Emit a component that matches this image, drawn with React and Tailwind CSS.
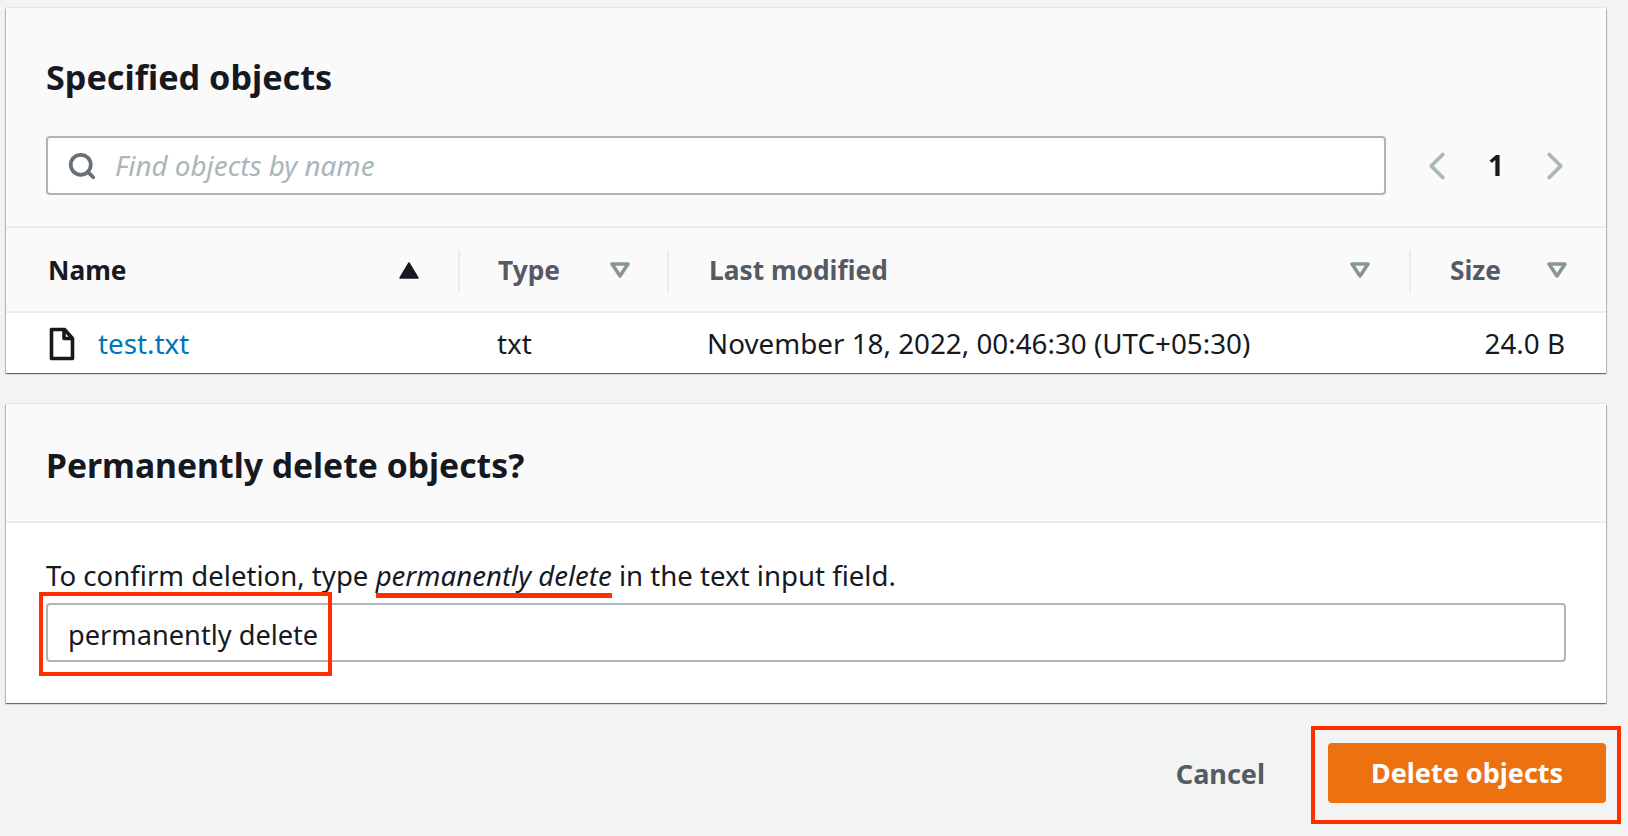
import React from "react";
import { Search, ChevronLeft, ChevronRight } from "lucide-react";

const SortDown = () => (
  <svg width="22" height="18" viewBox="0 0 22 18" className="shrink-0 -mt-[2px]">
    <path d="M3 3h16l-8 12z" fill="none" stroke="#879596" strokeWidth="3.5" strokeLinejoin="round" />
  </svg>
);

const SortUp = () => (
  <svg width="22" height="18" viewBox="0 0 22 18" className="shrink-0 -mt-[2px]">
    <path d="M11 2l9 15H2z" fill="#16191f" stroke="#16191f" strokeWidth="1.5" strokeLinejoin="round" />
  </svg>
);

const FileIcon = () => (
  <svg width="26" height="34" viewBox="0 0 26 34" className="shrink-0">
    <path d="M2.5 2.5h13l8 9v20h-21zM15 2.5v9h8.5" fill="none" stroke="#16191f" strokeWidth="3.6" strokeLinejoin="round" />
  </svg>
);

const HeaderCell = ({ label, dark, icon, pl, pr }) => (
  <div className="flex items-center h-[42px]">
    <div className={`flex flex-1 items-center justify-between ${pl} ${pr} font-bold text-[26.3px] ${dark ? "text-[#16191f]" : "text-[#545b64]"}`}>
      <span>{label}</span>
      {icon}
    </div>
  </div>
);

export default function App() {
  return (
    <div className="h-[836px] overflow-hidden bg-[#f2f3f3] pt-2 pl-[6px] pr-[22px] text-[27.8px] text-[#16191f] font-['Noto_Sans',sans-serif]">
      <div className="bg-white shadow-[0_1px_1px_0_rgba(0,28,36,0.4),1px_1px_1px_0_rgba(0,28,36,0.2),-1px_1px_1px_0_rgba(0,28,36,0.2),0_-1px_1px_0_rgba(0,28,36,0.06)]">
        <div className="bg-[#fafafa] border-b-2 border-[#eaeded] pt-[49px] pb-[31px] px-10">
          <h2 className="font-bold text-[34.2px] leading-10">Specified objects</h2>
          <div className="flex items-center mt-[39px]">
            <div className="flex items-center gap-[18px] w-[1340px] shrink-0 h-[59px] bg-white border-2 border-[#aab7b8] rounded-[4px] pl-[19px]">
              <Search size={30} strokeWidth={3} color="#687078" className="shrink-0" />
              <input
                readOnly
                placeholder="Find objects by name"
                className="flex-1 outline-none italic placeholder:text-[#aab7b8]"
              />
            </div>
            <div className="flex items-center justify-between w-[164px] shrink-0 ml-[28px] -mr-3">
              <ChevronLeft size={46} strokeWidth={2} color="#aab7b8" />
              <span className="font-bold">1</span>
              <ChevronRight size={46} strokeWidth={2} color="#aab7b8" />
            </div>
          </div>
        </div>

        <div className="grid grid-cols-[452px_209px_742px_197px] items-center h-[85px] pt-[2px] bg-[#fafafa] border-b-2 border-[#eaeded]">
          <HeaderCell label="Name" dark pl="pl-[42px]" pr="pr-[38px]" icon={<SortUp />} />
          <div className="border-l-2 border-[#eaeded]">
            <HeaderCell label="Type" pl="pl-[38px]" pr="pr-9" icon={<SortDown />} />
          </div>
          <div className="border-l-2 border-[#eaeded]">
            <HeaderCell label="Last modified" pl="pl-10" pr="pr-[38px]" icon={<SortDown />} />
          </div>
          <div className="border-l-2 border-[#eaeded]">
            <HeaderCell label="Size" pl="pl-[39px]" pr="pr-[38px]" icon={<SortDown />} />
          </div>
        </div>

        <div className="grid grid-cols-[452px_209px_742px_197px] items-center h-[60px] pt-[2px]">
          <div className="flex items-center gap-[23px] pl-[43px]">
            <FileIcon />
            <a className="text-[#0073bb]">test.txt</a>
          </div>
          <div className="pl-[39px]">txt</div>
          <div className="pl-10">November 18, 2022, 00:46:30 (UTC+05:30)</div>
          <div className="text-right pr-[41px]">24.0 B</div>
        </div>
      </div>

      <div className="mt-[31px] bg-white shadow-[0_1px_1px_0_rgba(0,28,36,0.4),1px_1px_1px_0_rgba(0,28,36,0.2),-1px_1px_1px_0_rgba(0,28,36,0.2),0_-1px_1px_0_rgba(0,28,36,0.06)]">
        <div className="bg-[#fafafa] border-b-2 border-[#eaeded] pt-[41px] pb-[36px] px-10">
          <h2 className="font-bold text-[33.7px] leading-10">Permanently delete objects?</h2>
        </div>
        <div className="px-10 pt-[35px] pb-[41px]">
          <p className="leading-[34px] text-[27.6px]">
            To confirm deletion, type{" "}
            <em className="relative">
              permanently delete
              <span className="absolute left-0 right-0 -bottom-[4px] h-[5px] bg-[#ff2d00]"></span>
            </em>{" "}
            in the text input field.
          </p>
          <div className="relative mt-[11px]">
            <input
              readOnly
              value="permanently delete"
              className="w-full h-[59px] bg-white border-2 border-[#aab7b8] rounded-[4px] pl-5 pt-[3px] text-[27.2px] outline-none"
            />
            <div className="absolute -left-[7px] -top-[11px] w-[293px] h-[84px] border-[4px] border-[#ff2d00]"></div>
          </div>
        </div>
      </div>

      <div className="flex justify-end items-center gap-[63px] mt-10 text-[27px]">
        <button className="font-bold text-[#545b64] pt-[2px]">Cancel</button>
        <div className="relative">
          <button className="w-[278px] h-[60px] bg-[#ec7211] rounded-[4px] font-bold text-white">Delete objects</button>
          <div className="absolute -left-[17px] -top-[17px] w-[310px] h-[98px] border-[4px] border-[#ff2d00]"></div>
        </div>
      </div>
    </div>
  );
}
